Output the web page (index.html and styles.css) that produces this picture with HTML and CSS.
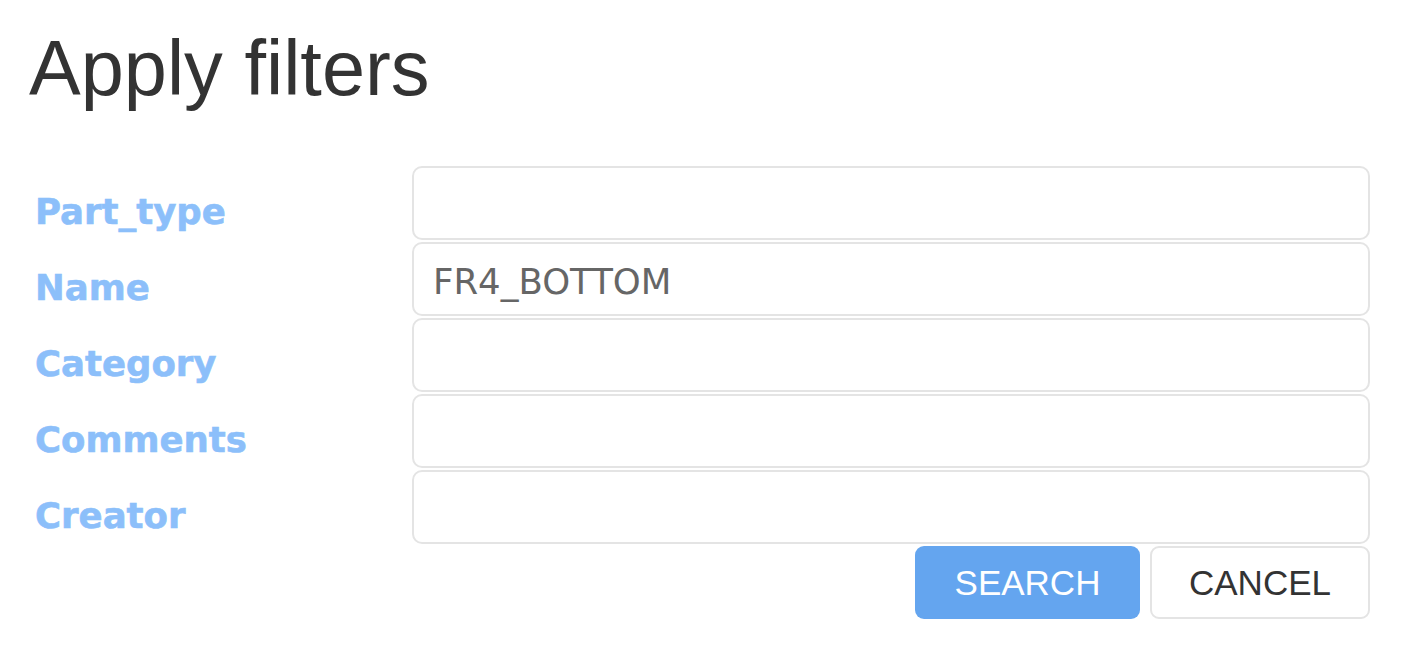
FILE: index.html
```html
<!DOCTYPE html>
<html>
<head>
<meta charset="utf-8">
<link rel="stylesheet" href="styles.css">
<title>Apply filters</title>
</head>
<body>
<div class="page">
  <h1 class="title">Apply filters</h1>
  <form class="filters">
    <label class="label" for="f1">Part_type</label>
    <input class="field" id="f1" type="text" value="">
    <label class="label" for="f2">Name</label>
    <input class="field" id="f2" type="text" value="FR4_BOTTOM">
    <label class="label" for="f3">Category</label>
    <input class="field" id="f3" type="text" value="">
    <label class="label" for="f4">Comments</label>
    <input class="field" id="f4" type="text" value="">
    <label class="label" for="f5">Creator</label>
    <input class="field" id="f5" type="text" value="">
    <div class="actions">
      <button class="btn btn-primary" type="button">SEARCH</button>
      <button class="btn btn-default" type="button">CANCEL</button>
    </div>
  </form>
</div>
</body>
</html>
```

FILE: styles.css
```css
html, body {
  margin: 0;
  padding: 0;
  background: #ffffff;
}

.page {
  padding: 29px 34px 0 29px;
}

.title {
  margin: 0;
  font-family: "Liberation Sans", Arial, sans-serif;
  font-weight: 400;
  font-size: 77.5px;
  line-height: 78px;
  color: #333333;
}

.filters {
  margin-top: 59px;
  display: grid;
  grid-template-columns: 383px 958px;
  row-gap: 2px;
}

.label {
  padding: 18px 0 0 6px;
  height: 74px;
  box-sizing: border-box;
  font-family: "DejaVu Sans", Verdana, sans-serif;
  font-weight: 700;
  font-size: 35.5px;
  line-height: 56px;
  color: #8cbffa;
  -webkit-text-stroke: 0.6px #8cbffa;
}

.field {
  height: 74px;
  box-sizing: border-box;
  border: 2px solid #e4e4e4;
  border-radius: 10px;
  padding: 5px 19px 0 19px;
  margin: 0;
  font-family: "DejaVu Sans", Verdana, sans-serif;
  font-size: 35.5px;
  color: #666666;
  background: #ffffff;
  outline: none;
}

.actions {
  grid-column: 2;
  display: flex;
  justify-content: flex-end;
  gap: 10px;
}

.btn {
  height: 73px;
  border-radius: 9px;
  font-family: "Liberation Sans", Arial, sans-serif;
  font-size: 35px;
  padding: 0;
  cursor: pointer;
}

.btn-primary {
  width: 225px;
  background: #64a5ef;
  border: none;
  color: #ffffff;
}

.btn-default {
  width: 220px;
  background: #ffffff;
  border: 2px solid #e4e4e4;
  color: #333333;
}
```
